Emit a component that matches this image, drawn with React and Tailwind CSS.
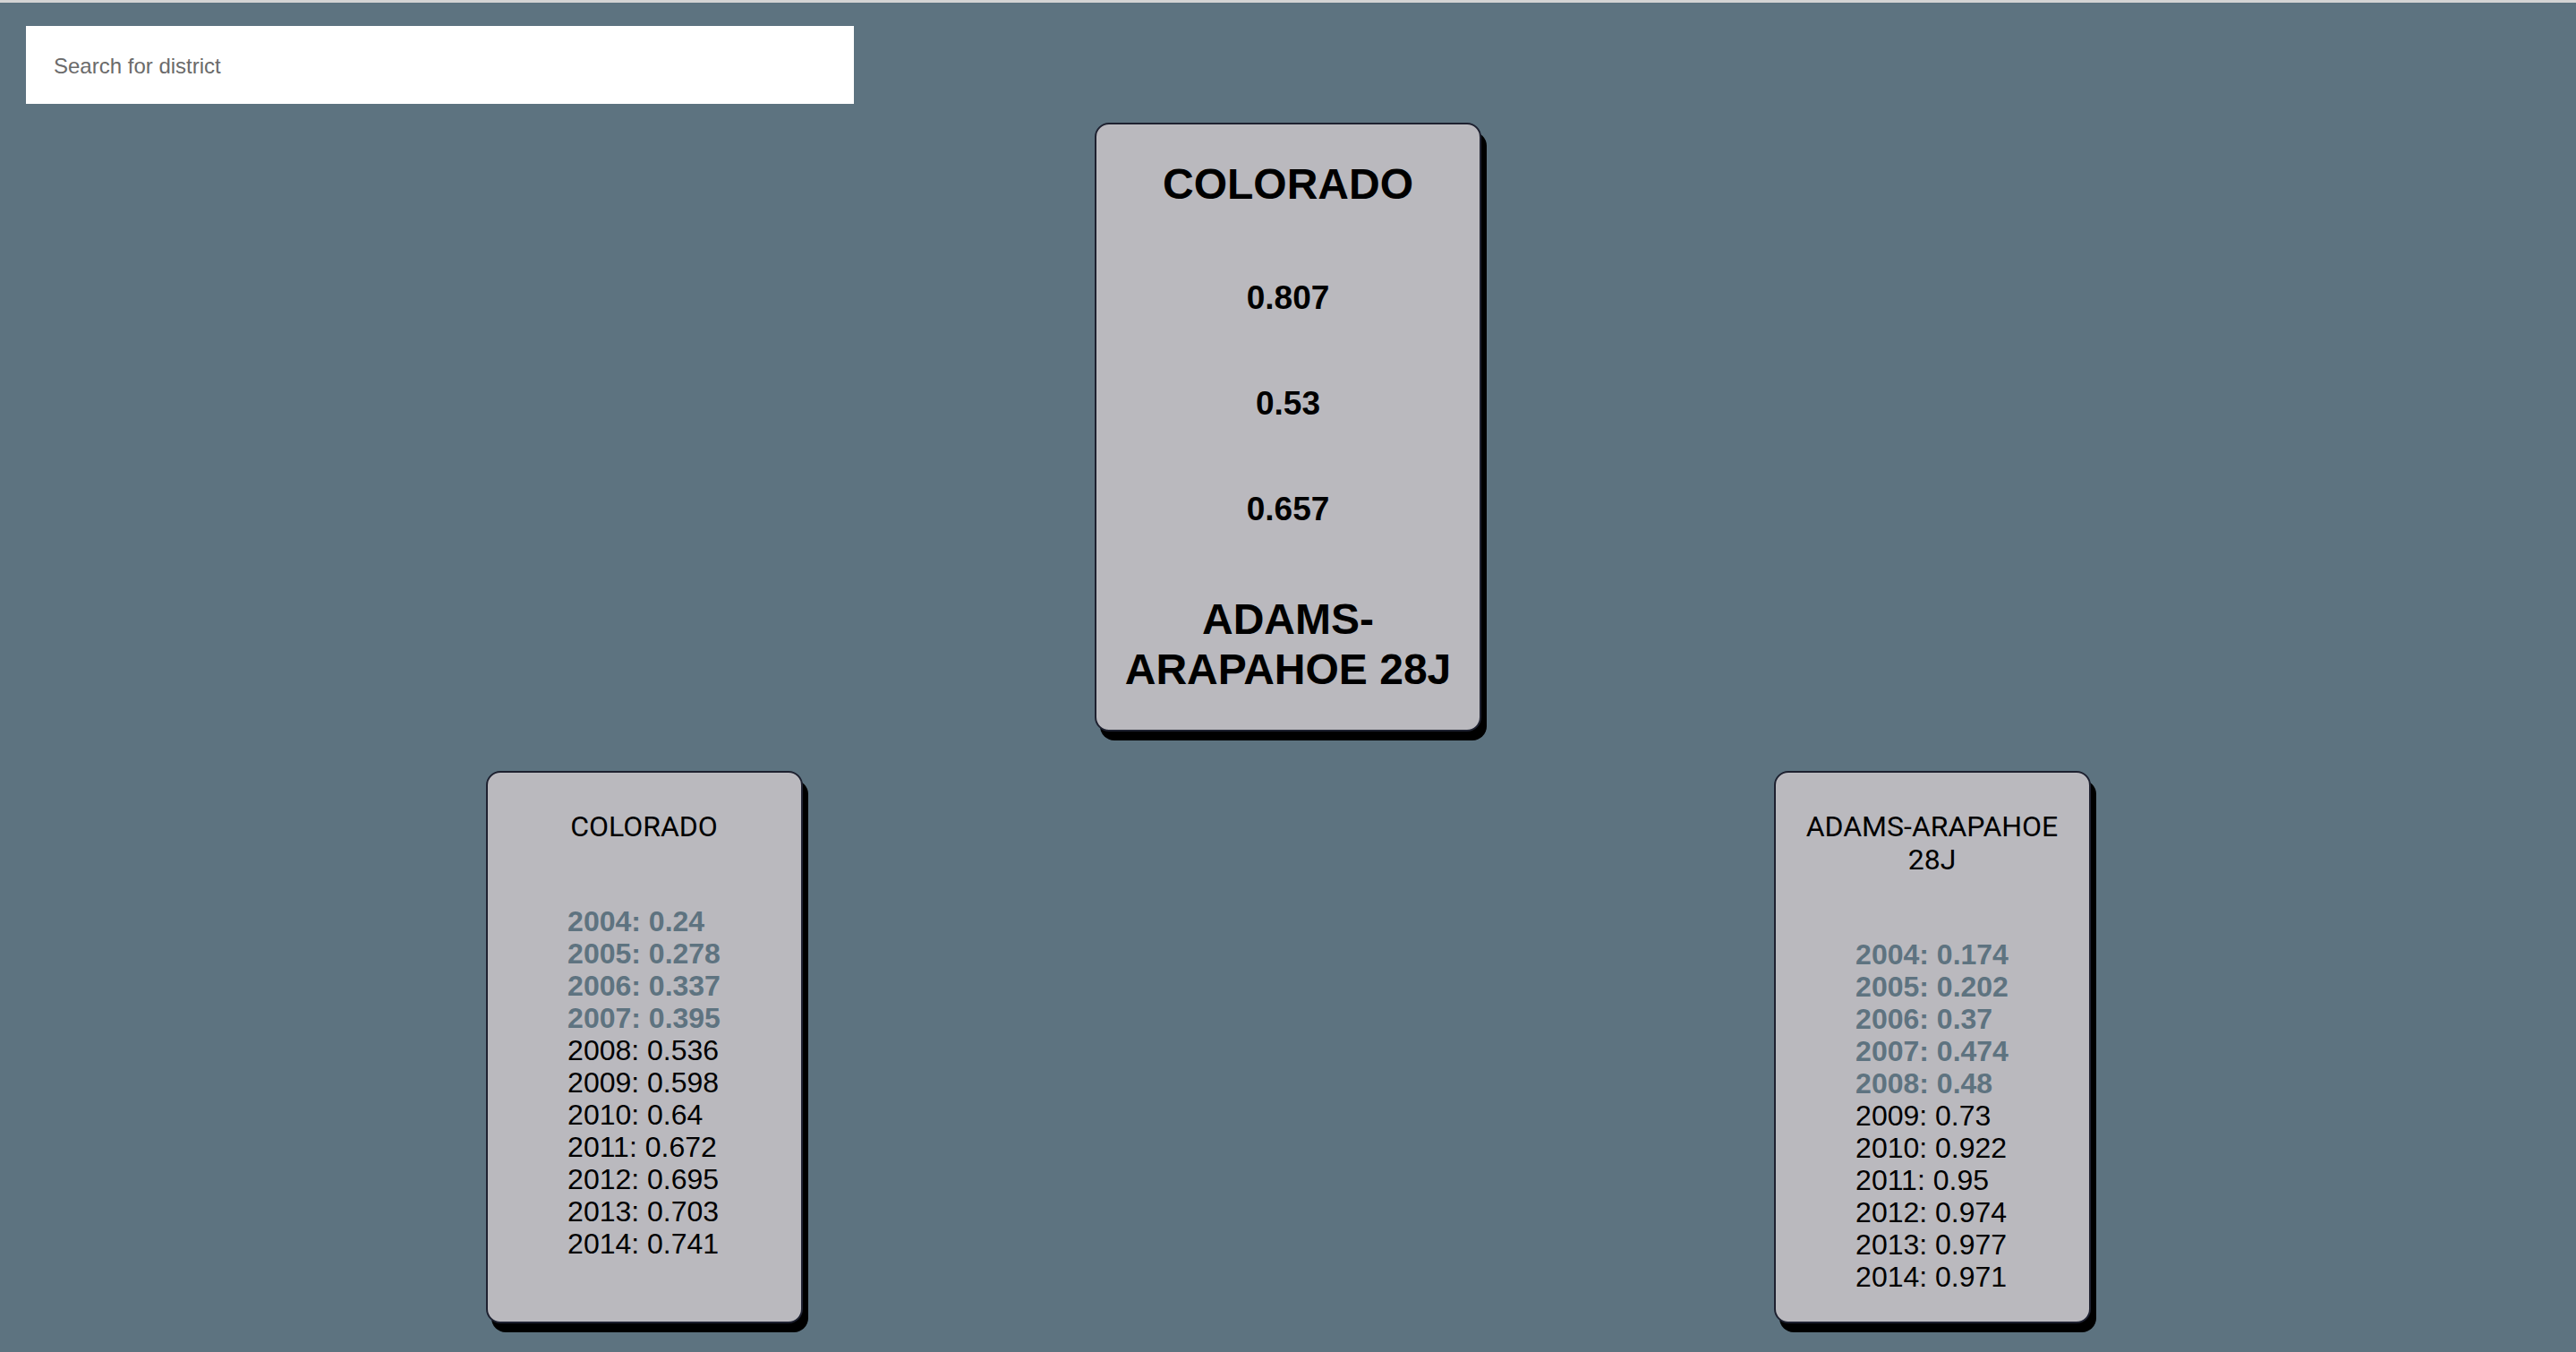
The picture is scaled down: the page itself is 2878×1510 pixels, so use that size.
import React from "react";

const colorado = [
  ["2004", "0.24", true],
  ["2005", "0.278", true],
  ["2006", "0.337", true],
  ["2007", "0.395", true],
  ["2008", "0.536", false],
  ["2009", "0.598", false],
  ["2010", "0.64", false],
  ["2011", "0.672", false],
  ["2012", "0.695", false],
  ["2013", "0.703", false],
  ["2014", "0.741", false],
];

const adams = [
  ["2004", "0.174", true],
  ["2005", "0.202", true],
  ["2006", "0.37", true],
  ["2007", "0.474", true],
  ["2008", "0.48", true],
  ["2009", "0.73", false],
  ["2010", "0.922", false],
  ["2011", "0.95", false],
  ["2012", "0.974", false],
  ["2013", "0.977", false],
  ["2014", "0.971", false],
];

function SideCard({ title, rows }) {
  return (
    <div className="justify-self-center w-[354px] rounded-[16px] border-2 border-[#1e2130] bg-[#bab9be] pt-[42px] pb-[32px] shadow-[6px_10px_0_#000] flex flex-col items-center">
      <div className="text-center text-[32px] leading-[37px] text-black font-['Roboto',sans-serif]">
        {title}
      </div>
      <ul className="mt-[69px] text-left text-[32px] leading-[36px] font-['Liberation_Sans',Arial,sans-serif]">
        {rows.map(([y, v, old]) => (
          <li key={y} className={old ? "font-bold text-[#5e7380]" : "text-black"}>
            {y}: {v}
          </li>
        ))}
      </ul>
    </div>
  );
}

export default function App() {
  return (
    <div className="min-h-screen w-full bg-[#5d7380] font-['Liberation_Sans',Arial,sans-serif] pb-[30px]">
      <div className="h-[3px] bg-[#d4d4d4]" />
      <div className="pt-[26px] pl-[29px]">
        <input
          type="text"
          placeholder="Search for district"
          className="w-[925px] h-[87px] bg-white px-[31px] pt-[3px] text-[24px] text-[#333] placeholder:text-[#6b6b6b] outline-none font-['Liberation_Sans',Arial,sans-serif]"
        />
      </div>

      <div className="mx-auto mt-[21px] w-[432px] rounded-[16px] border-2 border-[#1e2130] bg-[#bab9be] pt-[39px] pb-[39px] shadow-[6px_10px_0_#000] text-center text-black">
        <h2 className="text-[48px] leading-[56px] font-bold">COLORADO</h2>
        <h3 className="mt-[77px] text-[37px] leading-[43px] font-bold">0.807</h3>
        <h3 className="mt-[75px] text-[37px] leading-[43px] font-bold">0.53</h3>
        <h3 className="mt-[75px] text-[37px] leading-[43px] font-bold">0.657</h3>
        <h2 className="mt-[74px] text-[48px] leading-[56px] font-bold">
          ADAMS-
          <br />
          ARAPAHOE 28J
        </h2>
      </div>

      <div className="mt-[44px] grid grid-cols-2">
        <SideCard title="COLORADO" rows={colorado} />
        <SideCard
          title={
            <>
              ADAMS-ARAPAHOE
              <br />
              28J
            </>
          }
          rows={adams}
        />
      </div>
    </div>
  );
}
